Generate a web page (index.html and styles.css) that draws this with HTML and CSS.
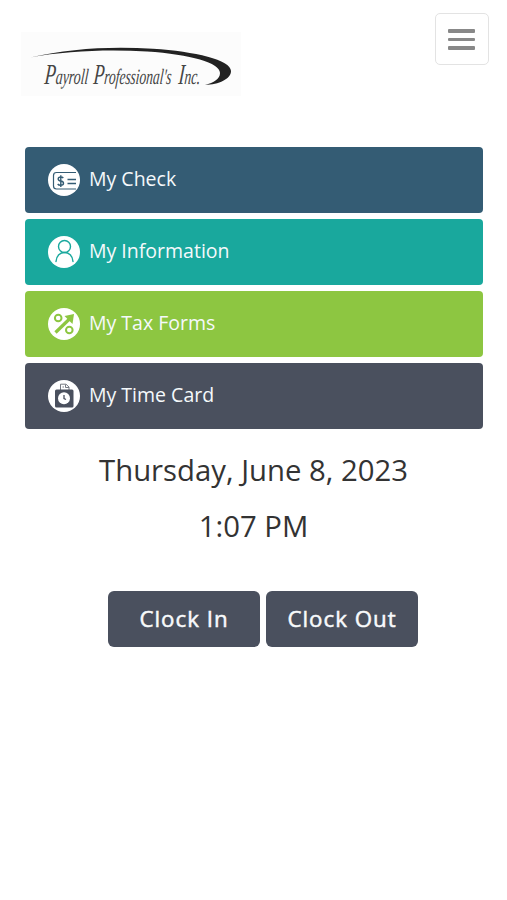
FILE: index.html
```html
<!DOCTYPE html>
<html lang="en">
<head>
<meta charset="utf-8">
<title>Payroll Professional's Inc.</title>
<link rel="stylesheet" href="styles.css">
</head>
<body>
<header class="header">
  <svg class="logo" viewBox="0 0 220 64" role="img">
    <path class="swoosh" d="M9 25.500C48 16.500 90 14 132 16.800C174 19.500 210 28 210 39C210 47 198 52.500 184 53C193 50.500 199 47 199 41C199 31 170 22.500 126 19.600C87 17.200 45 19 9 25.500Z"/>
    <g class="logo-text" transform="translate(0 52) skewX(-5)">
      <text x="23" textLength="44" lengthAdjust="spacingAndGlyphs"><tspan class="cap">P</tspan>ayroll</text>
      <text x="72" textLength="78" lengthAdjust="spacingAndGlyphs"><tspan class="cap">P</tspan>rofessional's</text>
      <text x="157" textLength="22" lengthAdjust="spacingAndGlyphs"><tspan class="cap">I</tspan>nc.</text>
    </g>
  </svg>
  <button class="menu" aria-label="Menu"><span class="bar"></span><span class="bar thin"></span><span class="bar"></span></button>
</header>
<main>
  <nav class="links">
    <a class="link check">
      <svg class="icon" viewBox="0 0 32 32"><circle cx="16" cy="16" r="16" fill="#fff"/><g fill="none" stroke="currentColor"><path d="M28 8.500H8.500Q5.500 8.500 5.500 11.500V22Q5.500 25 8.500 25H28" stroke-width="1.200"/><path d="M19.500 15.500H28M19.500 19.500H28" stroke-width="1.500"/><path d="M15.300 14Q14.500 13 12.700 13Q10.200 13 10.200 15Q10.200 16.700 12.700 17Q15.500 17.400 15.500 19.300Q15.500 21.200 12.700 21.200Q10.500 21.200 9.700 20M12.800 11.300V23" stroke-width="1.400"/></g></svg>
      <span>My Check</span>
    </a>
    <a class="link info">
      <svg class="icon" viewBox="0 0 32 32"><circle cx="16" cy="16" r="16" fill="#fff"/><g fill="none" stroke="currentColor" stroke-width="1.400" stroke-linecap="round"><circle cx="16.500" cy="10.500" r="6"/><path d="M8 25.500C8.500 13.500 24.500 13.500 25 25.500"/></g></svg>
      <span>My Information</span>
    </a>
    <a class="link tax">
      <svg class="icon" viewBox="0 0 32 32"><circle cx="16" cy="16" r="16" fill="#fff"/><g fill="none" stroke="currentColor"><circle cx="10.200" cy="10" r="3.300" stroke-width="2"/><circle cx="21.300" cy="22" r="3.300" stroke-width="2"/><path d="M7.500 24.500L22 10.500" stroke-width="3.200"/></g><path d="M16.500 8L26 6L24.500 16Z" fill="currentColor"/></svg>
      <span>My Tax Forms</span>
    </a>
    <a class="link time">
      <svg class="icon" viewBox="0 0 32 32"><circle cx="16" cy="16" r="16" fill="#fff"/><path d="M12.500 10V4.200H18L21 7V10M17.500 4.500V7.500H21M14.500 7H16" fill="none" stroke="#777b83"/><rect x="7" y="9.500" width="18.500" height="18" rx="1.500" fill="currentColor"/><circle cx="16" cy="18.300" r="6" fill="#fff"/><path d="M16 15V18.500L18 19.500" fill="none" stroke="currentColor" stroke-width="1.300"/></svg>
      <span>My Time Card</span>
    </a>
  </nav>
  <section class="clock">
    <div class="date">Thursday, June 8, 2023</div>
    <div class="now">1:07 PM</div>
    <div class="actions"><button class="punch">Clock In</button><button class="punch">Clock Out</button></div>
  </section>
</main>
</body>
</html>
```
FILE: styles.css
```css
* { box-sizing: border-box; }
body { margin: 0; background: #fff; color: #333; font-family: "Open Sans", sans-serif; }
.header { display: flex; justify-content: space-between; align-items: flex-start; height: 147.300px; padding: 13px 18.500px 0 21px; }
.logo { width: 220px; height: 64px; margin-top: 19px; background: #fcfcfc; overflow: visible; }
.swoosh { fill: #222; }
.logo-text { font-family: "Liberation Serif", serif; font-style: italic; font-size: 22px; fill: #444; }
.cap { font-size: 29px; }
.menu { display: flex; flex-direction: column; align-items: center; justify-content: center; gap: 5px; width: 54px; height: 52px; padding: 0; background: #fff; border: 1.5px solid #e3e3e3; border-radius: 5px; }
.bar { width: 27px; height: 4px; border-radius: 1px; background: #888; }
.thin { height: 3px; }
.links { display: grid; gap: 6px; padding: 0 24.500px 0 25px; }
.link { display: flex; align-items: center; gap: 9px; height: 66px; padding: 0 23px 1px; border-radius: 4px; font-size: 19.500px; }
.link span { color: #f5f9fb; position: relative; top: -1.500px; }
.icon { width: 32px; height: 32px; }
.check { background: #345c74; color: #345c74; }
.info { background: #19a89d; color: #19a89d; }
.tax { background: #8dc641; color: #8dc641; }
.time { background: #4a505e; color: #4a505e; }
.clock { display: flex; flex-direction: column; align-items: center; padding-top: 20.700px; font-size: 29.300px; line-height: 40px; }
.now { margin-top: 16px; }
.actions { display: flex; gap: 6px; margin: 45px 0 0 19px; }
.punch { width: 152px; height: 56px; padding: 0 0 1px; border: 0; border-radius: 6px; background: #4a505e; color: #f8fafc; font-family: inherit; font-size: 22.300px; letter-spacing: 1px; -webkit-text-stroke: 0.5px #f8fafc; }
```
